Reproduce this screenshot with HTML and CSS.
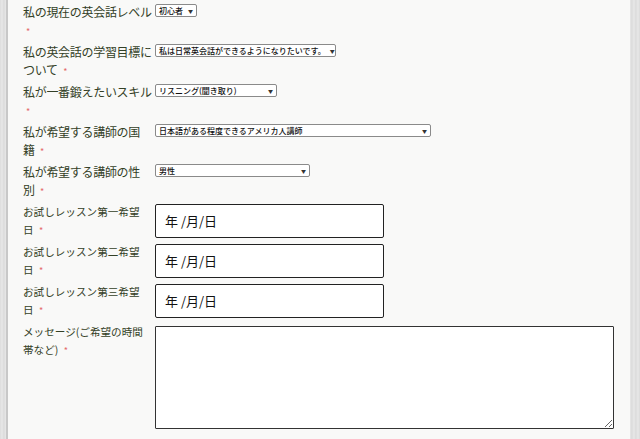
FILE: index.html
```html
<!DOCTYPE html>
<html lang="ja">
<head>
<meta charset="utf-8">
<link rel="stylesheet" href="styles.css">
</head>
<body>
<div class="page">
  <form class="form">
    <div class="row">
      <div class="label">私の現在の英会話レベル<br><span class="req">*</span></div>
      <div class="field field-select"><div class="select w1"><span>初心者</span><span class="arrow">▼</span></div></div>
    </div>
    <div class="row">
      <div class="label">私の英会話の学習目標に<br>ついて <span class="req">*</span></div>
      <div class="field field-select"><div class="select w2"><span>私は日常英会話ができるようになりたいです。</span><span class="arrow">▼</span></div></div>
    </div>
    <div class="row">
      <div class="label">私が一番鍛えたいスキル<br><span class="req">*</span></div>
      <div class="field field-select"><div class="select w3"><span>リスニング(聞き取り)</span><span class="arrow">▼</span></div></div>
    </div>
    <div class="row">
      <div class="label">私が希望する講師の国<br>籍 <span class="req">*</span></div>
      <div class="field field-select"><div class="select w4"><span>日本語がある程度できるアメリカ人講師</span><span class="arrow">▼</span></div></div>
    </div>
    <div class="row">
      <div class="label">私が希望する講師の性<br>別 <span class="req">*</span></div>
      <div class="field field-select"><div class="select w5"><span>男性</span><span class="arrow">▼</span></div></div>
    </div>
    <div class="row">
      <div class="label small">お試しレッスン第一希望<br>日 <span class="req">*</span></div>
      <div class="field"><div class="date">年 /月/日</div></div>
    </div>
    <div class="row">
      <div class="label small">お試しレッスン第二希望<br>日 <span class="req">*</span></div>
      <div class="field"><div class="date">年 /月/日</div></div>
    </div>
    <div class="row">
      <div class="label small">お試しレッスン第三希望<br>日 <span class="req">*</span></div>
      <div class="field"><div class="date">年 /月/日</div></div>
    </div>
    <div class="row row-msg">
      <div class="label small">メッセージ(ご希望の時間<br>帯など) <span class="req">*</span></div>
      <div class="field field-msg"><textarea class="msg"></textarea></div>
    </div>
  </form>
</div>
</body>
</html>
```

FILE: styles.css
```css
html, body {
  margin: 0;
  padding: 0;
  height: 100%;
}
body {
  background: repeating-linear-gradient(90deg, #dcdcdc 0, #e8e8e8 2px, #d9d9d9 4px);
  font-family: "Noto Sans CJK JP", "Noto Sans", sans-serif;
  overflow: hidden;
}
.page {
  margin-left: 6px;
  width: 622px;
  height: 439px;
  border-left: 2px solid #c8c8c8;
  background: #f9f9f8;
}
.form {
  padding: 2px 0 0 15px;
}
.row {
  display: flex;
  height: 40px;
}
.label {
  width: 132px;
  flex: none;
  padding-top: 1px;
  font-size: 12px;
  line-height: 18px;
  color: #334026;
  white-space: nowrap;
  letter-spacing: -0.3px;
}
.label.small {
  font-size: 10.6px;
  letter-spacing: 0;
}
.req {
  color: #e46a6a;
  font-size: 9px;
  margin-left: 3px;
}
.field-select {
  padding-top: 4px;
}
.select {
  display: flex;
  justify-content: space-between;
  align-items: center;
  box-sizing: border-box;
  height: 13px;
  padding: 0 3px 0 3px;
  border: 1px solid #8a8a8a;
  border-radius: 2px;
  background: #fff;
  font-size: 8px;
  line-height: 11px;
  color: #111;
  font-weight: 500;
  white-space: nowrap;
  overflow: hidden;
}
.arrow {
  font-size: 5px;
  color: #333;
  margin-left: 4px;
}
.w1 { width: 42px; }
.w2 { width: 181px; }
.w3 { width: 122px; }
.w4 { width: 276px; }
.w5 { width: 155px; }
.field {
  padding-top: 2px;
}
.date {
  box-sizing: border-box;
  width: 229px;
  height: 34px;
  border: 1px solid #222;
  border-radius: 2px;
  background: #fff;
  padding-left: 9px;
  font-size: 13px;
  line-height: 32px;
  color: #111;
}
.row-msg {
  height: 110px;
}
.field-msg {
  padding-top: 4px;
}
.msg {
  box-sizing: border-box;
  display: block;
  width: 459px;
  height: 103px;
  margin: 0;
  border: 1px solid #333;
  border-radius: 1px;
  background: #fff;
}
```
